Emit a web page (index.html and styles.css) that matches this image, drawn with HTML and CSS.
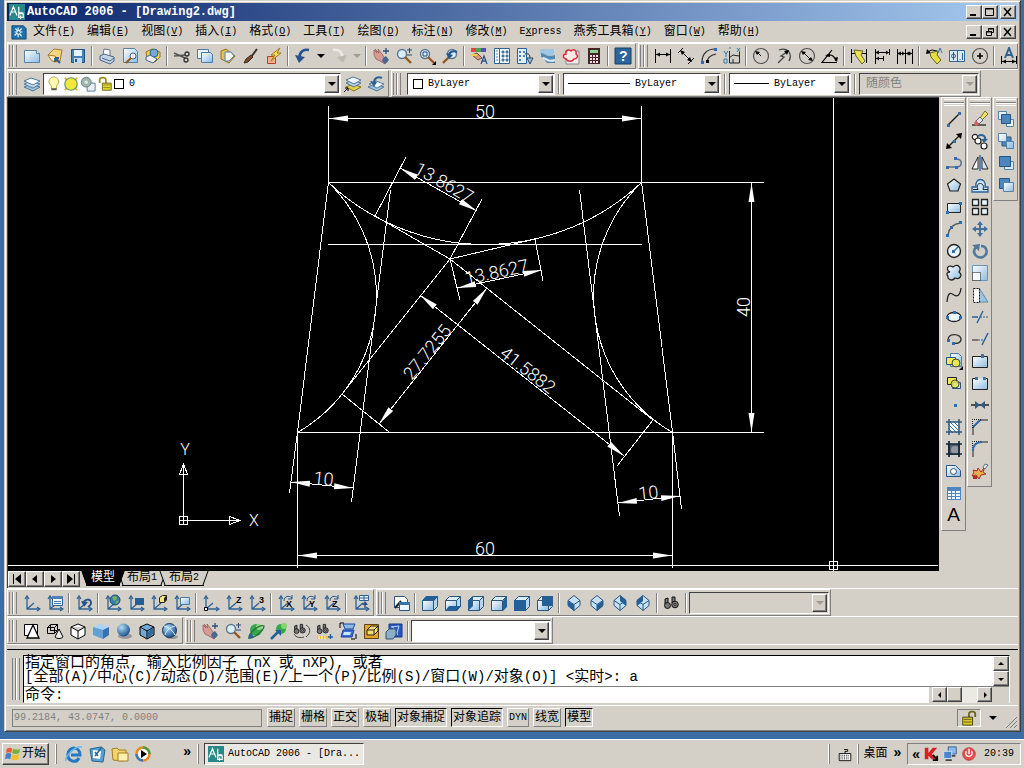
FILE: index.html
```html
<!DOCTYPE html>
<html lang="zh-CN">
  <head>
    <meta charset="UTF-8" />
    <meta name="viewport" content="width=device-width, initial-scale=1.0" />
    <title>AutoCAD 2006 - [Drawing2.dwg]</title>
    <link rel="stylesheet" href="styles.css">
  </head>

  <body>
    <svg class="sprite" aria-hidden="true">
      <defs>
        <linearGradient id="sky" x1="0" y1="0" x2="1" y2="1"><stop offset="0" stop-color="#fff" /><stop offset="1" stop-color="#8dbbe0" /></linearGradient>
        <radialGradient id="ball" cx=".35" cy=".3" r=".7"><stop offset="0" stop-color="#b4dcf8" /><stop offset="1" stop-color="#1d5790" /></radialGradient>
        <marker id="arrow" markerUnits="userSpaceOnUse" markerWidth="20" markerHeight="8" refX="19" refY="4" orient="auto-start-reverse"><path d="M19 4L0 7V1z" fill="#fff" /></marker>
        <g id="axes" fill="none" stroke="#2d6296" stroke-width="1.3"><path d="M4 2v13h13M4 15l7-6" /><path d="M2 5l2-3 2 3M14 13l3 2-3 2" /></g>
        <g id="cube" stroke="#285680" stroke-width="1"><path d="M1.500 6.500l4-4h11l-4 4z" fill="#d9ecfa" /><path d="M1.500 6.500h11v10h-11z" fill="url(#sky)" /><path d="M12.500 6.500l4-4v10l-4 4z" fill="#b3d5f0" /></g>
        <g id="gem" stroke="#285680"><path d="M9 1.500l6 5v5l-6 5-6-5v-5z" fill="#c5e1f6" /><path d="M3 6.500l6 4 6-4M9 10.500v6" fill="none" /></g>
        <g id="hand"><path d="M2 3l3 3-2-4 4 4-1-4 4 5 2 3 4 4-3 3-5-3-4-2-2-4z" fill="#d79b96" stroke="#9c5a58" stroke-width=".8" /><path d="M11 11l3-2 3 4-4 4-3-3z" fill="#47698f" /><path d="M14 1v6M11 4h6" stroke="#254f7d" stroke-width="1.3" /></g>
        <g id="lens"><circle cx="7" cy="7" r="4.500" fill="#d9ecf8" stroke="#5b7894" stroke-width="1.4" /><path d="M10 10l6 6" stroke="#94591f" stroke-width="2.4" /></g>
        <g id="glasses" fill="#777" stroke="#111"><path d="M2 10V5l3-1v6M9 9V3h3v5" /><circle cx="4.500" cy="11.500" r="3" /><circle cx="12" cy="10.500" r="3.300" /><circle cx="12" cy="10.500" r="1" fill="#fff" /></g>
      </defs>

      <symbol id="acad" viewBox="0 0 18 18"><path d="M0 0h18v18H0z" fill="#278a88" /><path d="M1 13L5 3l4 10M3 9h4M11 3v7h5M13 17v-4M11 11h5v4h-5z" fill="none" stroke="#fff" stroke-width="1.300" /></symbol>
      <symbol id="dwg" viewBox="0 0 18 18"><path d="M1 2h13l3 3v12H1z" fill="#216fa8" stroke="#134872" /><path d="M8 4v11M4 9h9M5 5l7 9M12 5l-8 8" stroke="#d5f1ff" stroke-width="1.400" /><circle cx="8.500" cy="9.500" r="2" fill="#216fa8" stroke="#fff" /></symbol>

      <symbol id="new" viewBox="0 0 18 18"><path d="M1.500 3.500h12l3 3v9h-15z" fill="url(#sky)" stroke="#5583a6" /><path d="M13.500 3.500v3h3" fill="#fff" stroke="#5583a6" /></symbol>
      <symbol id="open" viewBox="0 0 18 18"><path d="M2 8l6-6 8 1-2 11-6 1z" fill="#f2d583" stroke="#a77d26" /><path d="M2 8l7 1 5 6-8-1z" fill="#fff2b9" stroke="#a77d26" /><path d="M9 11l5 5M9 11h4M9 11v4" stroke="#2e5f91" stroke-width="1.800" /></symbol>
      <symbol id="save" viewBox="0 0 18 18"><path d="M2.500 2.500h13v13h-13z" fill="#4a82b8" stroke="#235184" /><path d="M5 3h8v6H5z" fill="#e8f4fc" /><path d="M5 11h8v5H5z" fill="#c5d9e8" /><path d="M6 12h2v3H6z" fill="#285680" /></symbol>
      <symbol id="print" viewBox="0 0 18 18"><path d="M5 8L6 2l6 1v6" fill="#fff" stroke="#617894" /><path d="M2 9l4-2 10 3v4l-4 3-10-4z" fill="#c6d5e5" stroke="#496585" /><path d="M4 11l8 3 4-3" fill="none" stroke="#496585" /></symbol>
      <symbol id="preview" viewBox="0 0 18 18"><path d="M2.500 1.500h11l3 3v11h-14z" fill="url(#sky)" stroke="#5583a6" /><circle cx="12" cy="9" r="3" fill="#eef" stroke="#496585" /><path d="M10 11l-5 5" stroke="#94591f" stroke-width="2" /></symbol>
      <symbol id="publish" viewBox="0 0 18 18"><path d="M2 5l6-3 8 3v5l-5 5-8-4z" fill="#f1cf55" stroke="#927020" /><circle cx="10" cy="6" r="4" fill="#75aad5" stroke="#2c6294" /><path d="M2 10l4-2 7 4-4 4-7-3z" fill="#e7edf3" stroke="#496585" /></symbol>
      <symbol id="cut" viewBox="0 0 18 18"><path d="M1 6l11 5M1 9l11-1" stroke="#555" stroke-width="1.700" /><circle cx="14" cy="7" r="2" fill="none" stroke="#333" stroke-width="1.300" /><circle cx="13" cy="13" r="2" fill="none" stroke="#333" stroke-width="1.300" /></symbol>
      <symbol id="copy" viewBox="0 0 18 18"><path d="M1.500 2.500h11v9h-11z" fill="#e8f4fc" stroke="#4c7ca4" /><path d="M5.500 5.500h9l2 2v8h-11z" fill="url(#sky)" stroke="#4c7ca4" /></symbol>
      <symbol id="paste" viewBox="0 0 18 18"><path d="M2 4l5-2 9 7-6 7-8-4z" fill="#e6c256" stroke="#927020" /><path d="M6 5h6l3 4-5 5H6z" fill="#eff8ff" stroke="#5583a6" /></symbol>
      <symbol id="match" viewBox="0 0 18 18"><path d="M15 2L9 10" stroke="#3b302a" stroke-width="2" /><path d="M9 8l2 2-5 5-4 1 2-4z" fill="#7b492b" stroke="#402a20" /></symbol>
      <symbol id="bedit" viewBox="0 0 18 18"><path d="M2.500 9.500h8v7h-8z" fill="#f0b285" stroke="#bb3f24" /><path d="M15 1L6 8h4l-4 6 10-8h-4z" fill="#ffe052" stroke="#a67418" /></symbol>
      <symbol id="undo" viewBox="0 0 18 18"><path d="M5 11C6 4 10 2 15 3" fill="none" stroke="#24548d" stroke-width="2.600" /><path d="M1 8l4 8 6-6z" fill="#24548d" /></symbol>
      <symbol id="redo" viewBox="0 0 18 18"><path d="M13 11C12 4 8 2 3 3" fill="none" stroke="#eceae5" stroke-width="2.600" /><path d="M17 8l-4 8-6-6z" fill="#bdb9b1" /></symbol>
      <symbol id="pan" viewBox="0 0 18 18"><use href="#hand" /></symbol>
      <symbol id="zoom" viewBox="0 0 18 18"><use href="#lens" /><path d="M12 3h5M14.500 1v5M12 8h5" stroke="#254f7d" /></symbol>
      <symbol id="zoomwin" viewBox="0 0 18 18"><use href="#lens" /><path d="M5 5h4v4H5z" fill="none" stroke="#254f7d" /><path d="M18 14v4h-4z" /></symbol>
      <symbol id="zoomprev" viewBox="0 0 18 18"><g transform="matrix(-1 0 0 1 18 0)"><use href="#lens" /></g><path d="M8 9c0-4 4-6 8-4" fill="none" stroke="#24548d" stroke-width="2" /><path d="M5 6l3 6 4-4z" fill="#24548d" /></symbol>
      <symbol id="props" viewBox="0 0 18 18"><path d="M1 1h5v4H1z" fill="#e64343" /><path d="M6 1h5v4H6z" fill="#44a74c" /><path d="M11 1h5v4h-5z" fill="#584bc0" /><path d="M2 8l5-2 5 5-4 2z" fill="#d69b7e" stroke="#7e4635" /><path d="M1 7h6v2H1z" fill="#e8d24a" /><path d="M11 17l3-8 3 8M12 14h4" fill="none" stroke="#24548d" stroke-width="1.300" /></symbol>
      <symbol id="dcenter" viewBox="0 0 18 18"><path d="M1.500 1.500h15v15h-15z" fill="#f5faff" stroke="#2c6294" /><path d="M6.500 2v14" stroke="#2c6294" /><path d="M3 4h2M3 7h2M3 10h2M3 13h2M9 4h2v2H9zM13 4h2v2h-2zM9 8h2v2H9zM13 8h2v2h-2zM9 12h2v2H9zM13 12h2v2h-2z" fill="#4a82b8" stroke="#3c6d9d" stroke-width=".8" /></symbol>
      <symbol id="palettes" viewBox="0 0 18 18"><path d="M1.500 1.500h9v15h-9z" fill="#e0effb" stroke="#2c6294" /><path d="M3 4h2v2H3zM7 4h2v2H7zM3 8h2v2H3zM7 8h2v2H7zM3 12h2v2H3z" fill="#4a82b8" /><path d="M9 7c4-1 5 1 5 4" fill="none" stroke="#333" /><path d="M11 11h6l-3 6z" fill="#9ebcd5" stroke="#294b6c" /></symbol>
      <symbol id="sheets" viewBox="0 0 18 18"><path d="M1 2h14v5l-4 2-10-2z" fill="#9dc7e2" /><path d="M2 6c5 0 4 5 14 2v8H9C6 16 6 10 2 10z" fill="#548ab0" /><path d="M4 11c4 0 4 5 12 2" fill="none" stroke="#dceef7" stroke-width="2" /></symbol>
      <symbol id="markup" viewBox="0 0 18 18"><path d="M4 4h13v13H4z" fill="#eee" stroke="#888" /><path d="M4 12c-4-1-3-5 0-5-1-4 3-5 5-3 3-3 6 0 5 3 3 2 1 5-2 5-2 3-6 3-8 0z" fill="#ffe9e5" stroke="#d82737" stroke-width="1.400" /></symbol>
      <symbol id="calc" viewBox="0 0 18 18"><path d="M3 1h12v16H3z" fill="#43262a" /><path d="M5 3h8v3H5z" fill="#92d391" /><path d="M5 8h2v2H5zM8 8h2v2H8zM11 8h2v2h-2zM5 11h2v2H5zM8 11h2v2H8zM11 11h2v2h-2zM5 14h2v2H5zM8 14h2v2H8zM11 14h2v2h-2z" fill="#f8dce0" /></symbol>
      <symbol id="help" viewBox="0 0 18 18"><path d="M1 1h16v16H1z" fill="#2d669c" stroke="#153f67" /></symbol>

      <symbol id="dlinear" viewBox="0 0 18 18"><path d="M1.500 2v14M16.500 2v14M2 7.500h14" stroke="#000" /><path d="M2 7.500l4-2v4zM16 7.500l-4-2v4z" /></symbol>
      <symbol id="daligned" viewBox="0 0 18 18"><path d="M1 6l5-5M11 17l6-6M4 4l10 10" stroke="#000" /><path d="M3 3l5 2-3 3zM15 15l-5-2 3-3z" /></symbol>
      <symbol id="darc" viewBox="0 0 18 18"><path d="M2 15C2 7 7 2 15 2M7 16c0-5 4-8 9-9" fill="none" stroke="#333" stroke-width="1.200" /><path d="M1 14h3v3H1zM14 1h3v3h-3z" fill="#2f6eae" /><path d="M6 13h3v3H6z" /></symbol>
      <symbol id="dord" viewBox="0 0 18 18"><path d="M6.500 4v12h10V5M6 11l4-3 6 1M10 12v4" fill="none" stroke="#222" /><path d="M1 4l2 3 2-3M3 7v3M1 12h3v4H1zM6 1h2M14 1l3 4M17 1l-3 4" fill="none" stroke="#3574ad" /></symbol>
      <symbol id="dradius" viewBox="0 0 18 18"><circle cx="9" cy="9" r="7.500" fill="none" stroke="#555" stroke-width="1.200" /><path d="M9 9L5 5" stroke="#000" /><path d="M3 4l5 1-3 3z" /></symbol>
      <symbol id="djog" viewBox="0 0 18 18"><path d="M4 3c8-3 14 3 10 11M3 16l6-6-3-1 6-4" fill="none" stroke="#444" stroke-width="1.300" /><path d="M14 3l-5 1 3 4z" /></symbol>
      <symbol id="ddiam" viewBox="0 0 18 18"><circle cx="9" cy="9" r="7.500" fill="none" stroke="#555" stroke-width="1.200" /><path d="M5 5l8 8" stroke="#000" /><path d="M3 4l5 1-3 3zM15 14l-5-1 3-3z" /></symbol>
      <symbol id="dang" viewBox="0 0 18 18"><path d="M16 15.500H1L11 3M6 8c5-1 8 2 9 6" fill="none" stroke="#000" stroke-width="1.200" /><path d="M4 9l5-3v4zM13 11l4-1-1 5z" /></symbol>
      <symbol id="qdim" viewBox="0 0 18 18"><path d="M1.500 2v14M16.500 2v14M2 6.500h14" stroke="#000" /><path d="M4 3l9 1-2 4 4 6-3 3-6-8z" fill="#ece34b" stroke="#67621b" /></symbol>
      <symbol id="dbase" viewBox="0 0 18 18"><path d="M2.500 2v15M16.500 2v6M10.500 9v5M3 5.500h13M3 11.500h7" stroke="#000" /><path d="M2 5.500l4-2v4zM16 5.500l-3-2v4zM3 11.500l3-2v4z" /></symbol>
      <symbol id="dcont" viewBox="0 0 18 18"><path d="M1.500 2v15M9.500 2v15M16.500 2v15M2 6.500h14" stroke="#000" /><path d="M1 6.500l4-2v4zM9 6.500l-3-2v4zM10 6.500l3-2v4zM16 6.500l-3-2v4z" /></symbol>
      <symbol id="leader" viewBox="0 0 18 18"><path d="M2 5l5-2 5 1" fill="none" stroke="#000" /><path d="M1 7l1-5 4 4z" /><path d="M5 6l8-2-1 4 4 5-4 4-6-7z" fill="#e8df3e" stroke="#67621b" /><path d="M13 6l2-5 2 5" fill="none" stroke="#2f6eae" /></symbol>
      <symbol id="tol" viewBox="0 0 18 18"><path d="M1.500 3.500h15v11h-15zM9.500 4v10" fill="#d8e9f8" stroke="#2c6294" /><circle cx="5.500" cy="9" r="2" fill="none" stroke="#2c6294" /><path d="M5.500 5v8M12 12v1M14.500 6v7" stroke="#2c6294" /></symbol>
      <symbol id="dcen" viewBox="0 0 18 18"><circle cx="9" cy="9" r="7.500" fill="none" stroke="#555" stroke-width="1.200" /><path d="M9 6v6M6 9h6" stroke="#000" stroke-width="1.600" /></symbol>
      <symbol id="dedit" viewBox="0 0 18 18"><path d="M5 11L9 1l4 10M6 8h6" fill="none" stroke="#2c6294" stroke-width="2" /><path d="M1.500 9v8M16.500 9v8M2 14.500h14" stroke="#000" /><path d="M2 14.500l4-2v4zM16 14.500l-4-2v4z" /></symbol>

      <symbol id="layers" viewBox="0 0 18 18"><path d="M1 12l7-3 9 3-7 4z" fill="#9dc3df" stroke="#53789a" /><path d="M1 9l7-3 9 3-7 4z" fill="#c9e0f0" stroke="#53789a" /><path d="M1 6l7-3 9 3-7 4z" fill="#f4faff" stroke="#53789a" /></symbol>
      <symbol id="laycur" viewBox="0 0 18 18"><path d="M2 12l7-3 8 3-7 4z" fill="#e6d341" stroke="#837422" /><path d="M2 8l7-3 8 3-7 4z" fill="#b6d3e8" stroke="#53789a" /><path d="M2 5l7-3 8 3-7 4z" fill="#f4faff" stroke="#53789a" /><path d="M0 17l4-4M1 13h3v3" stroke="#000" fill="none" /></symbol>
      <symbol id="layprev" viewBox="0 0 18 18"><path d="M1 12l7-3 9 3-7 4z" fill="#9dc3df" stroke="#53789a" /><path d="M2 9l7-3 8 3-7 4z" fill="#f4faff" stroke="#53789a" /><path d="M7 8c0-5 4-7 8-5" fill="none" stroke="#2d6296" stroke-width="2" /><path d="M3 6l4 6 3-5z" fill="#2d6296" /></symbol>
      <symbol id="bulb" viewBox="0 0 18 18"><path d="M6 11C0 6 5 1 9 1s8 5 3 10v3H6z" fill="#fffbb0" stroke="#a4a14d" /><path d="M6 14h6v2H6z" fill="#555" /></symbol>
      <symbol id="sun" viewBox="0 0 18 18"><path d="M2 2l3 3M16 2l-3 3M2 16l3-3M16 16l-3-3" stroke="#d8b720" stroke-width="2" /><circle cx="9" cy="9" r="7" fill="#f3e839" stroke="#5a956b" stroke-width="1.300" /></symbol>
      <symbol id="vpsun" viewBox="0 0 18 18"><path d="M8 8h9v9H8z" fill="#eee" stroke="#47739a" /><circle cx="7" cy="7" r="5.500" fill="#9eb4ad" stroke="#617f83" /><circle cx="7" cy="7" r="2" fill="#dce4df" /></symbol>
      <symbol id="lock" viewBox="0 0 18 18"><path d="M3 8V4c0-3 7-3 7 0v4" fill="none" stroke="#9b9219" stroke-width="2" /><path d="M6 8h10v8H6z" fill="#e3d831" stroke="#686218" /><path d="M7 10h8M7 13h8" stroke="#918917" /></symbol>
      <symbol id="padlock" viewBox="0 0 18 18"><path d="M9 8V4c0-3 7-3 7 0v4" fill="none" stroke="#6b6414" stroke-width="2" /><path d="M2 8h11v9H2z" fill="#d8cc2a" stroke="#3d390f" /><path d="M3 10.500h9M3 13.500h9" stroke="#5c5514" /></symbol>

      <symbol id="line" viewBox="0 0 18 18"><path d="M3 15L15 3" stroke="#222" stroke-width="1.400" /><path d="M2 14h3v3H2zM13 2h3v3h-3z" fill="#2f6eae" /></symbol>
      <symbol id="xline" viewBox="0 0 18 18"><path d="M2 16L16 2" stroke="#222" stroke-width="1.400" /><path d="M1 17l1-6 5 5zM17 1l-1 6-5-5z" /><path d="M8 8h3v3H8z" fill="#2f6eae" /></symbol>
      <symbol id="pline" viewBox="0 0 18 18"><path d="M2 13h9c7 0 7-8 0-8" fill="none" stroke="#5c7187" stroke-width="1.500" /><path d="M1 12h3v3H1zM10 12h3v3h-3zM9 3h3v3H9z" fill="#2f6eae" /></symbol>
      <symbol id="polygon" viewBox="0 0 18 18"><path d="M9 3l6.500 5-2.500 7H5L2.500 8z" fill="url(#sky)" stroke="#222" stroke-width="1.200" /></symbol>
      <symbol id="rect" viewBox="0 0 18 18"><path d="M2.500 5.500h13v9h-13z" fill="url(#sky)" stroke="#222" /><path d="M1 13h3v3H1zM14 4h3v3h-3z" fill="#2f6eae" /></symbol>
      <symbol id="arc" viewBox="0 0 18 18"><path d="M3 15C4 8 8 4 15 3" fill="none" stroke="#555" stroke-width="1.500" /><path d="M1 14h3v3H1zM5 6h3v3H5zM14 1h3v3h-3z" fill="#2f6eae" /></symbol>
      <symbol id="circle" viewBox="0 0 18 18"><circle cx="9" cy="9" r="6.500" fill="#e8f4fc" stroke="#222" stroke-width="1.400" /><path d="M8 10l5-5" stroke="#2f6eae" stroke-width="1.500" /><path d="M7 8h3v3H7z" fill="#2f6eae" /></symbol>
      <symbol id="cloud" viewBox="0 0 18 18"><path d="M5 8C0 6 3 0 8 3c5-4 9 1 6 5 4 3 1 8-4 6-3 4-8 1-7-2-2-2-1-4 2-4z" fill="url(#sky)" stroke="#222" stroke-width="1.300" /></symbol>
      <symbol id="spline" viewBox="0 0 18 18"><path d="M2 16C3 5 6 7 9 9s6 1 7-7" fill="none" stroke="#222" stroke-width="1.300" /></symbol>
      <symbol id="ellipse" viewBox="0 0 18 18"><ellipse cx="9" cy="9" rx="7" ry="4.500" fill="#e8f4fc" stroke="#222" stroke-width="1.300" /><path d="M1 8h3v3H1zM14 8h3v3h-3zM8 3h3v3H8z" fill="#2f6eae" /></symbol>
      <symbol id="earc" viewBox="0 0 18 18"><path d="M3 10c0-8 13-6 13-1 0 4-4 5-8 4" fill="none" stroke="#333" stroke-width="1.400" /><path d="M2 9h3v3H2zM7 12h3v3H7z" fill="#2f6eae" /></symbol>
      <symbol id="block" viewBox="0 0 18 18"><path d="M2.500 3.500h9v7h-9z" fill="#f2e94d" stroke="#222" /><path d="M7.500 8.500h8v6h-8z" fill="#c5e1f6" stroke="#285680" /><circle cx="10" cy="10" r="4" fill="#e7e84a" fill-opacity=".8" stroke="#444" /></symbol>
      <symbol id="insert" viewBox="0 0 18 18"><path d="M5.500 1.500h8l3 3v10h-11z" fill="url(#sky)" stroke="#4c7ca4" /><path d="M1.500 5.500h9v7h-9z" fill="#f2e94d" stroke="#285680" /><circle cx="11" cy="11" r="4" fill="#e7e84a" stroke="#444" /><path d="M18 14v4h-4z" /></symbol>
      <symbol id="point" viewBox="0 0 18 18"><path d="M9 8h3v3H9z" fill="#2f6eae" /></symbol>
      <symbol id="hatch" viewBox="0 0 18 18"><path d="M3 4h12v11H3z" fill="#fff" /><path d="M3 6l9 9M3 10l5 5M5 4l10 10M9 4l6 6" stroke="#3473b0" /><path d="M4 1v16M14 1v16M1 4h16M1 14h16" stroke="#285680" stroke-width="1.500" /></symbol>
      <symbol id="gradient" viewBox="0 0 18 18"><path d="M3 4h12v11H3z" fill="#56626d" /><circle cx="10" cy="10" r="4" fill="#91999e" /><path d="M4 1v16M14 1v16M1 4h16M1 14h16" stroke="#13243a" stroke-width="1.700" /></symbol>
      <symbol id="region" viewBox="0 0 18 18"><path d="M1.500 3.500h9l5 5v6h-14z" fill="url(#sky)" stroke="#285680" /><circle cx="8.500" cy="9.500" r="3" fill="#fff" stroke="#285680" /></symbol>
      <symbol id="table" viewBox="0 0 18 18"><path d="M2 3h14v13H2z" fill="#4b86c4" /><path d="M3 7h3v2H3zM7 7h3v2H7zM11 7h4v2h-4zM3 10h3v2H3zM7 10h3v2H7zM11 10h4v2h-4zM3 13h3v2H3zM7 13h3v2H7zM11 13h4v2h-4z" fill="#edf6ff" /></symbol>

      <symbol id="erase" viewBox="0 0 18 18"><path d="M1 15h14" stroke="#222" stroke-width="1.300" /><path d="M9 8l5-7 3 3-6 6z" fill="#f2e463" stroke="#777023" /><path d="M5 11l4-4 3 3-4 4z" fill="#dde6ef" stroke="#567" /><path d="M3 13l2-3 3 4-3 2z" fill="#de635d" /></symbol>
      <symbol id="copyobj" viewBox="0 0 18 18"><g fill="#fff" stroke="#222" stroke-width="1.200"><circle cx="4" cy="5" r="2.700" /><circle cx="7" cy="9" r="3" /><circle cx="13" cy="14" r="3" /></g><path d="M7 4c5-3 8 1 7 4" fill="none" stroke="#2d6296" stroke-width="2" /><path d="M10 7h7l-4 4z" fill="#2d6296" /></symbol>
      <symbol id="mirror" viewBox="0 0 18 18"><path d="M7 3v12H1z" fill="#fff" stroke="#222" /><path d="M11 3v12h6z" fill="#d4e8f8" stroke="#222" /><path d="M9 1v16" stroke="#2f6eae" stroke-width="1.500" /></symbol>
      <symbol id="offset" viewBox="0 0 18 18"><path d="M1 16v-5h4c-2-10 11-10 9 0h3v5z" fill="#cae3f7" stroke="#2d6296" stroke-width="1.300" /><path d="M2 13.500h5c-4-8 8-8 5 0h5" fill="none" stroke="#222" /></symbol>
      <symbol id="array" viewBox="0 0 18 18"><path d="M1.500 1.500h6v6h-6zM10.500 1.500h6v6h-6zM1.500 10.500h6v6h-6zM10.500 10.500h6v6h-6z" fill="#e8f4fc" stroke="#222" stroke-width="1.300" /></symbol>
      <symbol id="move" viewBox="0 0 18 18"><path d="M9 3v12M3 9h12" stroke="#3f709e" stroke-width="2" /><path d="M9 1l3 4H6zM9 17l3-4H6zM1 9l4-3v6zM17 9l-4-3v6z" fill="#3f709e" /></symbol>
      <symbol id="rotate" viewBox="0 0 18 18"><path d="M5 5c-5 6 1 12 7 10 6-3 4-11-2-11" fill="none" stroke="#53779a" stroke-width="2.500" /><path d="M1 3l8-1-1 7z" fill="#53779a" /></symbol>
      <symbol id="scale" viewBox="0 0 18 18"><path d="M1.500 1.500h15v15h-15z" fill="url(#sky)" stroke="#6996b8" /><path d="M1.500 8.500h8v8h-8z" fill="#f5faff" stroke="#111" stroke-dasharray="1 1" /></symbol>
      <symbol id="stretch" viewBox="0 0 18 18"><path d="M8 2l9 14H8z" fill="#9bc5e3" stroke="#598bb0" /><path d="M2.500 2.500h6v14h-6z" fill="#fff" stroke="#111" stroke-dasharray="2 1" /></symbol>
      <symbol id="trim" viewBox="0 0 18 18"><path d="M1 9h6M12 3L6 15" stroke="#2d6296" stroke-width="1.400" /><path d="M9 9h9" stroke="#2d6296" stroke-dasharray="2 1" /></symbol>
      <symbol id="extend" viewBox="0 0 18 18"><path d="M1 10h6" stroke="#222" /><path d="M7 10h5" stroke="#2d6296" stroke-dasharray="2 1" /><path d="M17 3l-6 12" stroke="#2d6296" stroke-width="1.500" /></symbol>
      <symbol id="breakpt" viewBox="0 0 18 18"><path d="M1.500 4.500h15v11h-15z" fill="url(#sky)" stroke="#222" /><path d="M10 2h3v4h-3z" fill="#47739a" /></symbol>
      <symbol id="break" viewBox="0 0 18 18"><path d="M5 4.500H1.500v11h15v-11H14" fill="url(#sky)" stroke="#222" /><path d="M4 3h3v3H4zM12 3h3v3h-3z" fill="#47739a" /></symbol>
      <symbol id="join" viewBox="0 0 18 18"><path d="M0 9h18" stroke="#222" stroke-width="1.500" /><path d="M4 5l5 4-5 4zM14 5l-5 4 5 4z" fill="#31587e" /></symbol>
      <symbol id="chamfer" viewBox="0 0 18 18"><path d="M1.500 10V1.500H10" fill="none" stroke="#222" stroke-dasharray="1 1" /><path d="M2 17v-7l8-8h7" fill="none" stroke="#222" /><path d="M2 9l7-7" stroke="#2f6eae" stroke-width="2" /></symbol>
      <symbol id="fillet" viewBox="0 0 18 18"><path d="M1.500 10V1.500H10" fill="none" stroke="#222" stroke-dasharray="1 1" /><path d="M2 17v-6M10 2h7" stroke="#222" /><path d="M2 11c0-6 3-9 9-9" fill="none" stroke="#2f6eae" stroke-width="2" /></symbol>
      <symbol id="explode" viewBox="0 0 18 18"><path d="M2 8l4 1 1-3 3 4 5-7-3 7 3 2-5 1-2 4-3-4-4 1 2-4z" fill="#e6b34b" stroke="#a92d25" /><path d="M12 5l2-3 3 1-3 4z" fill="#eee" stroke="#62768d" /><path d="M2 14h4v3H2z" fill="#a92d25" /></symbol>

      <symbol id="front1" viewBox="0 0 18 18"><path d="M1.500 1.500h8v8h-8zM9.500 9.500h7v7h-7z" fill="#e8f4fc" stroke="#5482aa" /><path d="M4.500 4.500h9v9h-9z" fill="#4d86bd" stroke="#285680" /></symbol>
      <symbol id="back1" viewBox="0 0 18 18"><path d="M5 5h9v9H5z" fill="#4d86bd" stroke="#285680" /><path d="M1.500 1.500h8v8h-8zM9.500 9.500h7v7h-7z" fill="url(#sky)" stroke="#5482aa" /></symbol>
      <symbol id="above" viewBox="0 0 18 18"><path d="M7.500 7.500h9v8h-9z" fill="#d4e8f8" stroke="#5482aa" /><path d="M2.500 2.500h11v10h-11z" fill="#4d86bd" stroke="#285680" /></symbol>
      <symbol id="under" viewBox="0 0 18 18"><path d="M2.500 2.500h10v10h-10z" fill="#4d86bd" stroke="#285680" /><path d="M6.500 6.500h10v9h-10z" fill="url(#sky)" stroke="#5482aa" /></symbol>

      <symbol id="ucs" viewBox="0 0 18 18"><use href="#axes" /></symbol>
      <symbol id="ucsnamed" viewBox="0 0 18 18"><use href="#axes" /><path d="M6.500 2.500h10v9h-10z" fill="#eef7fe" stroke="#2d6296" /><path d="M6 2h11v3H6zM8 7h7v1H8zM8 9h7v1H8z" fill="#4a82b8" /></symbol>
      <symbol id="ucsprev" viewBox="0 0 18 18"><use href="#axes" /><path d="M9 9c0-4 7-5 7 0 0 3-2 3-3 4" fill="none" stroke="#24548d" stroke-width="2" /><path d="M6 7l3 6 4-5z" fill="#24548d" /></symbol>
      <symbol id="ucsworld" viewBox="0 0 18 18"><use href="#axes" /><circle cx="11" cy="6" r="5" fill="#347fa8" stroke="#264f70" /><path d="M8 3l4-1 1 3-3 2zM11 8l4-2-2 4z" fill="#77b759" /></symbol>
      <symbol id="ucsobj" viewBox="0 0 18 18"><use href="#axes" /><path d="M8 4h9v7H8z" fill="#235e96" /></symbol>
      <symbol id="ucsface" viewBox="0 0 18 18"><use href="#axes" /><path d="M9.500 3.500l3-2h4v4l-2 3h-5z" fill="#f1e97b" stroke="#222" /><path d="M14 4v4l3-2V1z" fill="#222" /></symbol>
      <symbol id="ucsview" viewBox="0 0 18 18"><use href="#axes" /><path d="M7.500 3.500h9v7h-9z" fill="url(#sky)" stroke="#4c7ca4" /></symbol>
      <symbol id="ucsorg" viewBox="0 0 18 18"><use href="#axes" /><path d="M2.500 13.500h3v3h-3z" fill="#fff" stroke="#000" /></symbol>
      <symbol id="ucsrot" viewBox="0 0 18 18"><use href="#axes" /><path d="M7 7c0-5 5-6 8-3M15 1v4h-4" fill="none" stroke="#24548d" /></symbol>
      <symbol id="ucsapply" viewBox="0 0 18 18"><use href="#axes" /><path d="M7.500 1.500h9v5h-9zM12 2v4M8 4h8" fill="#eef7fe" stroke="#2d6296" /><path d="M13 14V9" stroke="#24548d" stroke-width="1.500" /><path d="M10 11l3-4 3 4z" fill="#24548d" /></symbol>

      <symbol id="views" viewBox="0 0 18 18"><path d="M2.500 2.500h10l3 3v8h-13z" fill="#fff" stroke="#285680" /><path d="M3 14l6-7" stroke="#222" stroke-width="2" /><path d="M7.500 8.500h10v8h-10z" fill="#edf6ff" stroke="#285680" /><path d="M7 8h11v3H7z" fill="#3473b0" /></symbol>
      <symbol id="vtop" viewBox="0 0 18 18"><use href="#cube" /><path d="M1 7l4-5h12l-4 5z" fill="#245f96" /></symbol>
      <symbol id="vbottom" viewBox="0 0 18 18"><use href="#cube" /><path d="M1 17l4-5h12l-4 5z" fill="#245f96" /></symbol>
      <symbol id="vleft" viewBox="0 0 18 18"><use href="#cube" /><path d="M1 7l5-5v10l-5 5z" fill="#245f96" /></symbol>
      <symbol id="vright" viewBox="0 0 18 18"><use href="#cube" /><path d="M13 7l4-5v11l-4 4z" fill="#245f96" /></symbol>
      <symbol id="vfront" viewBox="0 0 18 18"><use href="#cube" /><path d="M1 6h12v11H1z" fill="#245f96" /></symbol>
      <symbol id="vback" viewBox="0 0 18 18"><use href="#cube" /><path d="M6 2h11v10H6z" fill="#245f96" /></symbol>
      <symbol id="vsw" viewBox="0 0 18 18"><use href="#gem" /><path d="M3 7l6 4v6l-6-5z" fill="#245f96" /></symbol>
      <symbol id="vse" viewBox="0 0 18 18"><use href="#gem" /><path d="M15 7l-6 4v6l6-5z" fill="#245f96" /></symbol>
      <symbol id="vne" viewBox="0 0 18 18"><use href="#gem" /><path d="M9 1l6 5v6l-6-5z" fill="#245f96" /></symbol>
      <symbol id="vnw" viewBox="0 0 18 18"><use href="#gem" /><path d="M9 1L3 6v6l6-5z" fill="#245f96" /></symbol>
      <symbol id="camera" viewBox="0 0 18 18"><use href="#glasses" /></symbol>

      <symbol id="sh2d" viewBox="0 0 18 18"><path d="M1.500 2.500h13v11h-13z" fill="#fff" stroke="#000" /><path d="M10 3l6 13H4z" fill="#fff" stroke="#000" stroke-width="1.300" /></symbol>
      <symbol id="sh3d" viewBox="0 0 18 18"><path d="M1.500 5.500l3-3h7l-3 3zM1.500 5.500h7v6h-7zM8.500 5.500l3-3v6l-3 3M4.500 3v6M4 8.500h7" fill="none" stroke="#000" /><path d="M13 7l4 8c-2 2-6 2-8 0z" fill="#eee" stroke="#000" /></symbol>
      <symbol id="shhid" viewBox="0 0 18 18"><path d="M2 5l7-3 7 3v8l-7 4-7-4zM2 5l7 4 7-4M9 9v8" fill="#fff" stroke="#000" /></symbol>
      <symbol id="shflat" viewBox="0 0 18 18"><path d="M1 5l7-3 9 3-6 3z" fill="#aad5f4" /><path d="M1 5l10 3v9L1 13z" fill="#619fd4" /><path d="M11 8l6-3v8l-6 4z" fill="#3473b0" /></symbol>
      <symbol id="shgour" viewBox="0 0 18 18"><ellipse cx="10" cy="14" rx="7" ry="3" fill="#999" /><circle cx="8.500" cy="8" r="6.500" fill="url(#ball)" /></symbol>
      <symbol id="shflate" viewBox="0 0 18 18"><path d="M2 5l7-3 7 3v8l-7 4-7-4z" fill="#72a8d5" stroke="#000" /><path d="M2 5l7 4 7-4M9 9v8" fill="none" stroke="#000" /><path d="M10 10l5-4v6l-5 4z" fill="#326a9e" /></symbol>
      <symbol id="shgoure" viewBox="0 0 18 18"><ellipse cx="11" cy="15" rx="6" ry="2" fill="#999" /><circle cx="8.500" cy="8.500" r="7" fill="url(#ball)" stroke="#15395d" /><path d="M3 4c5 1 9 5 11 9M14 4c-5 1-9 5-10 9" fill="none" stroke="#e0f0fb" /></symbol>
      <symbol id="orbit" viewBox="0 0 18 18"><circle cx="9" cy="8" r="6" fill="#35a84b" /><circle cx="12" cy="5" r="3" fill="#8fdc7c" /><path d="M2 16C1 12 12 2 17 4c0 5-11 13-15 12z" fill="none" stroke="#277040" stroke-width="1.300" /><path d="M1 17l3-6 3 4z" fill="#245f96" /></symbol>
      <symbol id="corbit" viewBox="0 0 18 18"><circle cx="11" cy="7" r="5" fill="#35a84b" /><circle cx="14" cy="4" r="3" fill="#83d66c" /><path d="M1 17l7-7" stroke="#245f96" stroke-width="2.500" /><path d="M5 8h6v6z" fill="#245f96" /></symbol>
      <symbol id="swivel" viewBox="0 0 18 18"><g transform="scale(.8)"><use href="#glasses" /></g><path d="M13 3c5 3 5 8 0 12M1 12c2 4 7 4 10 3" fill="none" stroke="#444" /></symbol>
      <symbol id="dist" viewBox="0 0 18 18"><g transform="scale(.8)"><use href="#glasses" /></g><path d="M1 14h11v3H1z" fill="#f2bd31" /><path d="M3 14v3M6 14v3M9 14v3" stroke="#fff" /><path d="M12 15h5M14.500 12v5" stroke="#245f96" stroke-width="1.300" /></symbol>
      <symbol id="clipadj" viewBox="0 0 18 18"><path d="M4 2h12l-2 5H6z" fill="#8dbbe0" stroke="#1b43a6" /><path d="M4 8h11l-2 7H2z" fill="#3b70d0" stroke="#1b43a6" /><path d="M1 1v5M1 1h4M16 17h-4M17 17v-5" stroke="#000" /><path d="M5 10h7l-1 3H4z" fill="#cce5ff" /></symbol>
      <symbol id="clipf" viewBox="0 0 18 18"><path d="M2.500 2.500h14v14h-14z" fill="#e5a72b" stroke="#5f4311" /><path d="M5 8l4-4h7v5l-4 4H5z" fill="#f7db74" stroke="#222" /><path d="M5 8h7v5M12 8l4-4" fill="none" stroke="#222" /></symbol>
      <symbol id="clipb" viewBox="0 0 18 18"><path d="M4 2h13v13H4z" fill="#2855c7" stroke="#163982" /><path d="M6 5l8-1-2 7M7 4l6 9" fill="none" stroke="#bcdcff" /><path d="M1 10l3-3h7v6l-3 4H1z" fill="#8baec9" stroke="#33536e" /></symbol>

      <symbol id="winflag" viewBox="0 0 18 18"><path d="M2 3q4-2 6 0L7 8Q4 6 1 8z" fill="#e75b31" /><path d="M9 3q4 2 8 0l-1 5q-4 2-8 0z" fill="#72b33e" /><path d="M1 9q3-2 6 0l-1 6q-3-2-6 0z" fill="#437fce" /><path d="M8 9q4 2 8 0l-1 6q-4 2-8 0z" fill="#f2bf30" /></symbol>
      <symbol id="ie" viewBox="0 0 18 18"><path d="M14 13c-3 6-12 3-11-4 1-8 12-8 12 1H6" fill="none" stroke="#2379c5" stroke-width="3" /><path d="M1 16C-1 12 11 0 17 2" fill="none" stroke="#68b9ec" stroke-width="1.500" /></symbol>
      <symbol id="desk" viewBox="0 0 18 18"><path d="M2 4l11-2 4 3-2 12-11-1z" fill="#57a1d7" stroke="#236396" /><path d="M5 5l8 1-1 8-7-1z" fill="#fff" /><path d="M7 11l7-9M7 7l3 4" stroke="#2a6595" stroke-width="1.500" /></symbol>
      <symbol id="folder" viewBox="0 0 18 18"><path d="M1 4l5-1 2 2h7v9l-3 2-10-1z" fill="#f4d26c" stroke="#a57c24" /><path d="M7 8h10v8H7z" fill="#fff0b1" stroke="#a57c24" /></symbol>
      <symbol id="media" viewBox="0 0 18 18"><circle cx="9" cy="9" r="6.500" fill="#fff" stroke="#e48b24" stroke-width="2.500" /><path d="M9 2.500a6.500 6.500 0 0 1 6.500 6.500" fill="none" stroke="#4b9c45" stroke-width="2.500" /><path d="M2.500 9A6.500 6.500 0 0 0 9 15.500" fill="none" stroke="#377abe" stroke-width="2.500" /><path d="M7 5l6 4-6 4z" /></symbol>
      <symbol id="keyboard" viewBox="0 0 18 18"><path d="M2.500 8.500h13v8h-13z" fill="#fff" stroke="#000" /><path d="M4 10.500h10M4 12.500h10M4 14.500h10" stroke="#000" stroke-dasharray="1 1" /><path d="M9 8V6h3V4H8" fill="none" stroke="#000" /></symbol>
      <symbol id="kav" viewBox="0 0 18 18"><path d="M2 2h4v6l5-6h5l-6 7 5 6h-5L6 11v4H2z" fill="#d91f24" /><path d="M11 10l5 5M16 11v5h-5" fill="none" stroke="#000" stroke-width="2" /></symbol>
      <symbol id="net" viewBox="0 0 18 18"><path d="M7 1h9v8H7z" fill="#8cb9e8" stroke="#315a94" /><path d="M2 6h9v8H2z" fill="#4b84ce" stroke="#d4e4f2" /><path d="M4 16h7M11 11h4" stroke="#444" stroke-width="2" /></symbol>
      <symbol id="power" viewBox="0 0 18 18"><circle cx="9" cy="9" r="7" fill="#e75151" stroke="#b72f36" /><path d="M6 6c-4 7 9 8 6 0M9 3v6" fill="none" stroke="#fff" stroke-width="1.500" /></symbol>
    </svg>

    <main class="window">
      <header class="title-bar">
        <svg class="icon"><use href="#acad" /></svg>
        <h1>AutoCAD 2006 - [Drawing2.dwg]</h1>
        <div class="caption-buttons">
          <button aria-label="最小化"><svg viewBox="0 0 12 10"><path d="M2 8h6" stroke="#000" stroke-width="2" /></svg></button>
          <button aria-label="最大化"><svg viewBox="0 0 12 10"><path d="M1.500 1.500h8v7h-8zM1 2h9" fill="none" stroke="#000" /></svg></button>
          <button aria-label="关闭" class="close"><svg viewBox="0 0 12 10"><path d="M2 1l7 8M9 1L2 9" stroke="#000" stroke-width="1.500" /></svg></button>
        </div>
      </header>

      <nav class="menu-bar">
        <svg class="icon"><use href="#dwg" /></svg>
        <button>文件<span class="en">(<u>F</u>)</span></button>
        <button>编辑<span class="en">(<u>E</u>)</span></button>
        <button>视图<span class="en">(<u>V</u>)</span></button>
        <button>插入<span class="en">(<u>I</u>)</span></button>
        <button>格式<span class="en">(<u>O</u>)</span></button>
        <button>工具<span class="en">(<u>T</u>)</span></button>
        <button>绘图<span class="en">(<u>D</u>)</span></button>
        <button>标注<span class="en">(<u>N</u>)</span></button>
        <button>修改<span class="en">(<u>M</u>)</span></button>
        <button><span class="en">E<u>x</u>press</span></button>
        <button>燕秀工具箱<span class="en">(<u>Y</u>)</span></button>
        <button>窗口<span class="en">(<u>W</u>)</span></button>
        <button>帮助<span class="en">(<u>H</u>)</span></button>
        <div class="caption-buttons">
          <button aria-label="最小化图形"><svg viewBox="0 0 12 10"><path d="M2 8h6" stroke="#000" stroke-width="2" /></svg></button>
          <button aria-label="还原图形"><svg viewBox="0 0 12 10"><path d="M4.500 4V1.500h5v4H8M4 2h6M2.500 4.500h5v4h-5zM2 5h6" fill="none" stroke="#000" /></svg></button>
          <button aria-label="关闭图形" class="close"><svg viewBox="0 0 12 10"><path d="M2 1l7 8M9 1L2 9" stroke="#000" stroke-width="1.500" /></svg></button>
        </div>
      </nav>

      <div class="dock">
        <div class="toolbar">
          <i class="grip"></i>
          <button class="tool" aria-label="新建"><svg><use href="#new" /></svg></button>
          <button class="tool" aria-label="打开"><svg><use href="#open" /></svg></button>
          <button class="tool" aria-label="保存"><svg><use href="#save" /></svg></button>
          <i class="sep"></i>
          <button class="tool" aria-label="打印"><svg><use href="#print" /></svg></button>
          <button class="tool" aria-label="打印预览"><svg><use href="#preview" /></svg></button>
          <button class="tool" aria-label="发布"><svg><use href="#publish" /></svg></button>
          <i class="sep"></i>
          <button class="tool" aria-label="剪切"><svg><use href="#cut" /></svg></button>
          <button class="tool" aria-label="复制"><svg><use href="#copy" /></svg></button>
          <button class="tool" aria-label="粘贴"><svg><use href="#paste" /></svg></button>
          <button class="tool" aria-label="特性匹配"><svg><use href="#match" /></svg></button>
          <button class="tool" aria-label="块编辑器"><svg><use href="#bedit" /></svg></button>
          <i class="sep"></i>
          <button class="tool" aria-label="放弃"><svg><use href="#undo" /></svg></button>
          <button class="more" aria-label="放弃列表"></button>
          <button class="tool" aria-label="重做" disabled><svg><use href="#redo" /></svg></button>
          <button class="more" aria-label="重做列表" disabled></button>
          <i class="sep"></i>
          <button class="tool" aria-label="实时平移"><svg><use href="#pan" /></svg></button>
          <button class="tool" aria-label="实时缩放"><svg><use href="#zoom" /></svg></button>
          <button class="tool" aria-label="窗口缩放"><svg><use href="#zoomwin" /></svg></button>
          <button class="tool" aria-label="缩放上一个"><svg><use href="#zoomprev" /></svg></button>
          <i class="sep"></i>
          <button class="tool" aria-label="特性"><svg><use href="#props" /></svg></button>
          <button class="tool" aria-label="设计中心"><svg><use href="#dcenter" /></svg></button>
          <button class="tool" aria-label="工具选项板"><svg><use href="#palettes" /></svg></button>
          <button class="tool" aria-label="图纸集管理器"><svg><use href="#sheets" /></svg></button>
          <button class="tool" aria-label="标记集管理器"><svg><use href="#markup" /></svg></button>
          <button class="tool" aria-label="快速计算器"><svg><use href="#calc" /></svg></button>
          <i class="sep"></i>
          <button class="tool" aria-label="帮助"><svg><use href="#help" /><text x="5" y="14" fill="#fff" class="glyph-help">?</text></svg></button>
        </div>
        <div class="toolbar grow">
          <i class="grip"></i>
          <button class="tool" aria-label="线性标注"><svg><use href="#dlinear" /></svg></button>
          <button class="tool" aria-label="对齐标注"><svg><use href="#daligned" /></svg></button>
          <button class="tool" aria-label="弧长标注"><svg><use href="#darc" /></svg></button>
          <button class="tool" aria-label="坐标标注"><svg><use href="#dord" /></svg></button>
          <i class="sep"></i>
          <button class="tool" aria-label="半径标注"><svg><use href="#dradius" /></svg></button>
          <button class="tool" aria-label="折弯标注"><svg><use href="#djog" /></svg></button>
          <button class="tool" aria-label="直径标注"><svg><use href="#ddiam" /></svg></button>
          <button class="tool" aria-label="角度标注"><svg><use href="#dang" /></svg></button>
          <i class="sep"></i>
          <button class="tool" aria-label="快速标注"><svg><use href="#qdim" /></svg></button>
          <button class="tool" aria-label="基线标注"><svg><use href="#dbase" /></svg></button>
          <button class="tool" aria-label="连续标注"><svg><use href="#dcont" /></svg></button>
          <i class="sep"></i>
          <button class="tool" aria-label="快速引线"><svg><use href="#leader" /></svg></button>
          <button class="tool" aria-label="公差"><svg><use href="#tol" /></svg></button>
          <button class="tool" aria-label="圆心标记"><svg><use href="#dcen" /></svg></button>
          <i class="sep"></i>
          <button class="tool" aria-label="编辑标注"><svg><use href="#dedit" /></svg></button>
        </div>
      </div>

      <div class="dock">
        <div class="toolbar">
          <i class="grip"></i>
          <button class="tool" aria-label="图层特性管理器"><svg><use href="#layers" /></svg></button>
          <div class="combo layer">
            <svg><use href="#bulb" /></svg><svg><use href="#sun" /></svg><svg><use href="#vpsun" /></svg><svg><use href="#lock" /></svg>
            <i class="swatch"></i>
            <select aria-label="图层"><option>0</option></select>
            <i class="drop"></i>
          </div>
          <button class="tool" aria-label="将对象的图层置为当前"><svg><use href="#laycur" /></svg></button>
          <button class="tool" aria-label="上一个图层"><svg><use href="#layprev" /></svg></button>
        </div>
        <div class="toolbar">
          <i class="grip"></i>
          <div class="combo color">
            <i class="swatch"></i>
            <select aria-label="颜色"><option>ByLayer</option></select>
            <i class="drop"></i>
          </div>
          <i class="sep"></i>
          <div class="combo linetype">
            <i class="rule"></i>
            <select aria-label="线型"><option>ByLayer</option></select>
            <i class="drop"></i>
          </div>
          <i class="sep"></i>
          <div class="combo weight">
            <i class="rule"></i>
            <select aria-label="线宽"><option>ByLayer</option></select>
            <i class="drop"></i>
          </div>
          <i class="sep"></i>
          <div class="combo plot off">
            <select class="zh" aria-label="打印样式" disabled><option>随颜色</option></select>
            <i class="drop"></i>
          </div>
        </div>
      </div>

      <div class="workspace">
        <section class="drawing">
          <svg class="canvas" role="img" aria-label="图形">
            <g transform="translate(-8 -98)">
              <!-- geometry -->
              <g class="geo">
                <path d="M328 182.500H764M328 244.500H642M297 432.500H764" />
                <path d="M328.500 182L297.500 432L289.500 493M641.500 182L672.500 432L681.500 509" />
                <path d="M390.500 190L351.500 502M579.500 190L619.500 516" />
                <path d="M328.500 182.500A228.500 228.500 0 0 0 641.500 182.500" />
                <path d="M328.500 182.500A158 158 0 0 1 297.500 432.500M641.500 182.500A158 158 0 0 0 672.500 432.500" />
                <path d="M375 216L450 259L535 239M342 394L450 259L653 420" />
              </g>
              <!-- extension lines -->
              <g class="geo">
                <path d="M328.500 106V182M641.500 106V182M297.500 432V568M672.500 432V568" />
                <path d="M375 216L406 157M450 259L482 199M450 259L460 300M535 239L543 281" />
                <path d="M342 394L389 432M653 420L617 466" />
              </g>
              <!-- dimension lines -->
              <g class="geo dim">
                <path d="M329 118.500H641" />
                <path d="M298 555.500H672" />
                <path d="M751.500 183V432" />
                <path d="M400 168L477 211" />
                <path d="M457 288L542 270" />
                <path d="M379 424L487 288" />
                <path d="M420 295L624 456" />
                <path d="M291 482L353 488" />
                <path d="M618 503L680 496" />
              </g>
              <g class="dim-text">
                <text transform="translate(485 118)">50</text>
                <text transform="translate(485 555)">60</text>
                <text transform="translate(750 307) rotate(-90)">40</text>
                <text transform="translate(441 188) rotate(29)">13.8627</text>
                <text transform="translate(498 278) rotate(-12)">13.8627</text>
                <text transform="translate(432 356) rotate(-51)">27.7255</text>
                <text transform="translate(524 375) rotate(38)">41.5882</text>
                <text transform="translate(323 485) rotate(6)">10</text>
                <text transform="translate(649 499) rotate(-6)">10</text>
              </g>
              <!-- UCS icon -->
              <g class="geo">
                <path d="M183.500 524V464M179 520.500H240M179.500 516.500h8v8h-8z" />
                <path d="M183.500 464L179.500 474.500H187.500zM240 520.500L229.500 516.500V524.500z" />
              </g>
              <g class="ucs-text">
                <text x="185" y="455">Y</text>
                <text x="254" y="526">X</text>
              </g>
              <!-- crosshair -->
              <path class="geo" d="M0 565.500H938M833.500 98V571M829.500 561.500h8v8h-8z" />
            </g>
          </svg>
          <div class="tabs">
            <button class="nav" aria-label="第一个"><svg viewBox="0 0 12 12"><path d="M2 1h1v10H2zM10 1v10L4 6z" /></svg></button>
            <button class="nav" aria-label="上一页"><svg viewBox="0 0 12 12"><path d="M8 2v8L3 6z" /></svg></button>
            <button class="nav" aria-label="下一页"><svg viewBox="0 0 12 12"><path d="M4 2v8l5-4z" /></svg></button>
            <button class="nav" aria-label="最后一个"><svg viewBox="0 0 12 12"><path d="M9 1h1v10H9zM2 1v10l6-5z" /></svg></button>
            <button class="tab active">模型</button>
            <button class="tab">布局<span class="en">1</span></button>
            <button class="tab">布局<span class="en">2</span></button>
          </div>
        </section>

        <aside class="side">
          <div class="toolbar vertical">
            <i class="grip"></i>
            <button class="tool" aria-label="直线"><svg><use href="#line" /></svg></button>
            <button class="tool" aria-label="构造线"><svg><use href="#xline" /></svg></button>
            <button class="tool" aria-label="多段线"><svg><use href="#pline" /></svg></button>
            <button class="tool" aria-label="正多边形"><svg><use href="#polygon" /></svg></button>
            <button class="tool" aria-label="矩形"><svg><use href="#rect" /></svg></button>
            <button class="tool" aria-label="圆弧"><svg><use href="#arc" /></svg></button>
            <button class="tool" aria-label="圆"><svg><use href="#circle" /></svg></button>
            <button class="tool" aria-label="修订云线"><svg><use href="#cloud" /></svg></button>
            <button class="tool" aria-label="样条曲线"><svg><use href="#spline" /></svg></button>
            <button class="tool" aria-label="椭圆"><svg><use href="#ellipse" /></svg></button>
            <button class="tool" aria-label="椭圆弧"><svg><use href="#earc" /></svg></button>
            <button class="tool" aria-label="插入块"><svg><use href="#insert" /></svg></button>
            <button class="tool" aria-label="创建块"><svg><use href="#block" /></svg></button>
            <button class="tool" aria-label="点"><svg><use href="#point" /></svg></button>
            <button class="tool" aria-label="图案填充"><svg><use href="#hatch" /></svg></button>
            <button class="tool" aria-label="渐变色"><svg><use href="#gradient" /></svg></button>
            <button class="tool" aria-label="面域"><svg><use href="#region" /></svg></button>
            <button class="tool" aria-label="表格"><svg><use href="#table" /></svg></button>
            <button class="tool mtext" aria-label="多行文字">A</button>
          </div>
          <div class="toolbar vertical">
            <i class="grip"></i>
            <button class="tool" aria-label="删除"><svg><use href="#erase" /></svg></button>
            <button class="tool" aria-label="复制对象"><svg><use href="#copyobj" /></svg></button>
            <button class="tool" aria-label="镜像"><svg><use href="#mirror" /></svg></button>
            <button class="tool" aria-label="偏移"><svg><use href="#offset" /></svg></button>
            <button class="tool" aria-label="阵列"><svg><use href="#array" /></svg></button>
            <button class="tool" aria-label="移动"><svg><use href="#move" /></svg></button>
            <button class="tool" aria-label="旋转"><svg><use href="#rotate" /></svg></button>
            <button class="tool" aria-label="缩放"><svg><use href="#scale" /></svg></button>
            <button class="tool" aria-label="拉伸"><svg><use href="#stretch" /></svg></button>
            <button class="tool" aria-label="修剪"><svg><use href="#trim" /></svg></button>
            <button class="tool" aria-label="延伸"><svg><use href="#extend" /></svg></button>
            <button class="tool" aria-label="打断于点"><svg><use href="#breakpt" /></svg></button>
            <button class="tool" aria-label="打断"><svg><use href="#break" /></svg></button>
            <button class="tool" aria-label="合并"><svg><use href="#join" /></svg></button>
            <button class="tool" aria-label="倒角"><svg><use href="#chamfer" /></svg></button>
            <button class="tool" aria-label="圆角"><svg><use href="#fillet" /></svg></button>
            <button class="tool" aria-label="分解"><svg><use href="#explode" /></svg></button>
          </div>
          <div class="toolbar vertical">
            <i class="grip"></i>
            <button class="tool" aria-label="前置"><svg><use href="#front1" /></svg></button>
            <button class="tool" aria-label="后置"><svg><use href="#back1" /></svg></button>
            <button class="tool" aria-label="置于对象之上"><svg><use href="#above" /></svg></button>
            <button class="tool" aria-label="置于对象之下"><svg><use href="#under" /></svg></button>
          </div>
        </aside>
      </div>

      <div class="dock">
        <div class="toolbar">
          <i class="grip"></i>
          <button class="tool" aria-label="UCS"><svg><use href="#ucs" /></svg></button>
          <button class="tool" aria-label="命名 UCS"><svg><use href="#ucsnamed" /></svg></button>
          <i class="sep"></i>
          <button class="tool" aria-label="上一个 UCS"><svg><use href="#ucsprev" /></svg></button>
          <i class="sep"></i>
          <button class="tool" aria-label="世界 UCS"><svg><use href="#ucsworld" /></svg></button>
          <button class="tool" aria-label="对象 UCS"><svg><use href="#ucsobj" /></svg></button>
          <button class="tool" aria-label="面 UCS"><svg><use href="#ucsface" /></svg></button>
          <button class="tool" aria-label="视图 UCS"><svg><use href="#ucsview" /></svg></button>
          <i class="sep"></i>
          <button class="tool" aria-label="原点 UCS"><svg><use href="#ucsorg" /></svg></button>
          <button class="tool" aria-label="Z 轴矢量 UCS"><svg><use href="#ucs" /><text x="11" y="9" class="glyph-sm">Z</text></svg></button>
          <button class="tool" aria-label="三点 UCS"><svg><use href="#ucs" /><text x="11" y="9" class="glyph-sm">3</text></svg></button>
          <i class="sep"></i>
          <button class="tool" aria-label="X 轴旋转 UCS"><svg><use href="#ucsrot" /><text x="9" y="13" class="glyph-sm">X</text></svg></button>
          <button class="tool" aria-label="Y 轴旋转 UCS"><svg><use href="#ucsrot" /><text x="9" y="13" class="glyph-sm">Y</text></svg></button>
          <button class="tool" aria-label="Z 轴旋转 UCS"><svg><use href="#ucsrot" /><text x="9" y="13" class="glyph-sm">Z</text></svg></button>
          <i class="sep"></i>
          <button class="tool" aria-label="应用 UCS"><svg><use href="#ucsapply" /></svg></button>
        </div>
        <div class="toolbar">
          <i class="grip"></i>
          <button class="tool" aria-label="命名视图"><svg><use href="#views" /></svg></button>
          <i class="sep"></i>
          <button class="tool" aria-label="俯视图"><svg><use href="#vtop" /></svg></button>
          <button class="tool" aria-label="仰视图"><svg><use href="#vbottom" /></svg></button>
          <button class="tool" aria-label="左视图"><svg><use href="#vleft" /></svg></button>
          <button class="tool" aria-label="右视图"><svg><use href="#vright" /></svg></button>
          <button class="tool" aria-label="主视图"><svg><use href="#vfront" /></svg></button>
          <button class="tool" aria-label="后视图"><svg><use href="#vback" /></svg></button>
          <i class="sep"></i>
          <button class="tool" aria-label="西南等轴测"><svg><use href="#vsw" /></svg></button>
          <button class="tool" aria-label="东南等轴测"><svg><use href="#vse" /></svg></button>
          <button class="tool" aria-label="东北等轴测"><svg><use href="#vne" /></svg></button>
          <button class="tool" aria-label="西北等轴测"><svg><use href="#vnw" /></svg></button>
          <i class="sep"></i>
          <button class="tool" aria-label="相机"><svg><use href="#camera" /></svg></button>
          <i class="sep"></i>
          <div class="combo view off">
            <select aria-label="视口比例" disabled><option></option></select>
            <i class="drop"></i>
          </div>
        </div>
      </div>

      <div class="dock">
        <div class="toolbar">
          <i class="grip"></i>
          <button class="tool" aria-label="二维线框"><svg><use href="#sh2d" /></svg></button>
          <button class="tool" aria-label="三维线框"><svg><use href="#sh3d" /></svg></button>
          <button class="tool" aria-label="消隐"><svg><use href="#shhid" /></svg></button>
          <button class="tool" aria-label="平面着色"><svg><use href="#shflat" /></svg></button>
          <button class="tool" aria-label="体着色"><svg><use href="#shgour" /></svg></button>
          <button class="tool" aria-label="带边框平面着色"><svg><use href="#shflate" /></svg></button>
          <button class="tool" aria-label="带边框体着色"><svg><use href="#shgoure" /></svg></button>
        </div>
        <div class="toolbar">
          <i class="grip"></i>
          <button class="tool" aria-label="三维平移"><svg><use href="#pan" /></svg></button>
          <button class="tool" aria-label="三维缩放"><svg><use href="#zoom" /></svg></button>
          <button class="tool" aria-label="三维动态观察"><svg><use href="#orbit" /></svg></button>
          <button class="tool" aria-label="三维连续观察"><svg><use href="#corbit" /></svg></button>
          <button class="tool" aria-label="三维旋转"><svg><use href="#swivel" /></svg></button>
          <button class="tool" aria-label="三维调整距离"><svg><use href="#dist" /></svg></button>
          <button class="tool" aria-label="三维调整剪裁平面"><svg><use href="#clipadj" /></svg></button>
          <button class="tool" aria-label="启用前向剪裁"><svg><use href="#clipf" /></svg></button>
          <button class="tool" aria-label="启用后向剪裁"><svg><use href="#clipb" /></svg></button>
          <i class="sep"></i>
          <div class="combo view">
            <select aria-label="三维视图"><option></option></select>
            <i class="drop"></i>
          </div>
        </div>
      </div>

      <section class="command">
        <i class="grip"></i>
        <div class="console">
          <div class="history">
            <div class="lines">
              <p>指定窗口的角点<span>, </span>输入比例因子<span> (nX </span>或<span> nXP), </span>或者</p>
              <p><span>[</span>全部<span>(A)/</span>中心<span>(C)/</span>动态<span>(D)/</span>范围<span>(E)/</span>上一个<span>(P)/</span>比例<span>(S)/</span>窗口<span>(W)/</span>对象<span>(O)] &lt;</span>实时<span>&gt;: a</span></p>
            </div>
            <div class="scroll-v">
              <button aria-label="向上滚动"><svg viewBox="0 0 8 8"><path d="M1 5h6L4 2z" /></svg></button>
              <button aria-label="向下滚动"><svg viewBox="0 0 8 8"><path d="M1 3h6L4 6z" /></svg></button>
            </div>
          </div>
          <div class="prompt">
            <label for="command-line">命令<span>:</span></label>
            <input id="command-line" type="text" />
            <div class="scroll-h">
              <button aria-label="向左滚动"><svg viewBox="0 0 8 8"><path d="M5 1v6L2 4z" /></svg></button>
              <button class="thumb" aria-label="滚动块"></button>
              <i class="track"></i>
              <button aria-label="向右滚动"><svg viewBox="0 0 8 8"><path d="M3 1v6l3-3z" /></svg></button>
            </div>
          </div>
        </div>
      </section>

      <footer class="status-bar">
        <output class="coords en">99.2184, 43.0747, 0.0000</output>
        <button>捕捉</button>
        <button>栅格</button>
        <button>正交</button>
        <button>极轴</button>
        <button class="on">对象捕捉</button>
        <button class="on">对象追踪</button>
        <button class="en">DYN</button>
        <button>线宽</button>
        <button class="on">模型</button>
        <div class="status-tray">
          <span class="tray-lock"><svg class="icon"><use href="#padlock" /></svg></span>
          <button class="more" aria-label="状态栏菜单"></button>
          <svg class="size-grip" viewBox="0 0 12 12"><path d="M1 12L12 1M5 12l7-7M9 12l3-3" stroke="#808080" /></svg>
        </div>
      </footer>
    </main>

    <footer class="taskbar">
      <button class="start"><svg class="icon"><use href="#winflag" /></svg>开始</button>
      <i class="bar"></i>
      <div class="quick">
        <button class="tool" aria-label="Internet Explorer"><svg><use href="#ie" /></svg></button>
        <button class="tool" aria-label="显示桌面"><svg><use href="#desk" /></svg></button>
        <button class="tool" aria-label="文件夹"><svg><use href="#folder" /></svg></button>
        <button class="tool" aria-label="媒体播放器"><svg><use href="#media" /></svg></button>
        <span class="chevron">»</span>
      </div>
      <i class="bar"></i>
      <button class="task"><svg class="icon"><use href="#acad" /></svg><span class="en">AutoCAD 2006 - [Dra...</span></button>
      <div class="deskband">
        <i class="bar"></i>
        <svg class="icon"><use href="#keyboard" /></svg>
        <i class="bar"></i>
        <span>桌面</span>
        <span class="chevron">»</span>
      </div>
      <div class="tray">
        <span class="chevron">«</span>
        <svg class="icon"><use href="#kav" /></svg>
        <svg class="icon"><use href="#net" /></svg>
        <svg class="icon"><use href="#power" /></svg>
        <time class="en">20:39</time>
      </div>
    </footer>
  </body>
</html>
```

FILE: styles.css
```css
* {
  box-sizing: border-box;
}

body {
  margin: 0;
  min-height: 100vh;
  display: flex;
  flex-direction: column;
  background: #3a6ea5;
  font-family: "Liberation Mono", "Noto Sans CJK SC", monospace;
  font-size: 12px;
  line-height: 14px;
  color: #000;
}

button,
select,
input {
  font: inherit;
  color: inherit;
  margin: 0;
  padding: 0;
  border: 0;
  border-radius: 0;
  background: none;
}

button {
  display: flex;
  align-items: center;
  justify-content: center;
  white-space: nowrap;
}

svg {
  display: block;
  flex: none;
}

.sprite {
  position: absolute;
  width: 0;
  height: 0;
}

.en,
button.en {
  font-size: 10px;
}

.icon {
  width: 16px;
  height: 16px;
}

.glyph-help {
  font: bold 14px "Liberation Sans", sans-serif;
}

.glyph-sm {
  font: bold 9px "Liberation Sans", sans-serif;
}

/* window frame */
.window {
  flex: 1;
  display: flex;
  flex-direction: column;
  margin: 0 3px 7px 4px;
  padding: 2px;
  background: #d4d0c8;
  border: 1px solid;
  border-color: #d4d0c8 #404040 #404040 #d4d0c8;
  box-shadow: inset 1px 1px #fff, inset -1px -1px #808080;
}

.title-bar {
  height: 18px;
  display: flex;
  align-items: center;
  padding: 0 2px;
  gap: 2px;
  background: linear-gradient(to right, #0a246a, #a6caf0);
}

.title-bar h1 {
  margin: 0;
  font-size: 12px;
  line-height: 18px;
  color: #fff;
}

.caption-buttons {
  margin-left: auto;
  display: flex;
}

.caption-buttons button {
  width: 16px;
  height: 14px;
}

.caption-buttons svg {
  width: 12px;
  height: 10px;
}

.caption-buttons .close {
  margin-left: 2px;
}

.caption-buttons button,
.nav,
.drop,
.scroll-v button,
.scroll-h button,
.start {
  background: #d4d0c8;
  border: 1px solid;
  border-color: #fff #404040 #404040 #fff;
  box-shadow: inset -1px -1px #808080;
}

.menu-bar {
  height: 21px;
  display: flex;
  align-items: center;
  gap: 12px;
  padding: 0 2px 0 4px;
}

.menu-bar > .icon {
  margin-right: -6px;
}

/* toolbars */
.dock {
  height: 28px;
  display: flex;
  gap: 2px;
  border-top: 1px solid #fff;
  overflow: hidden;
}

.menu-bar + .dock {
  height: 27px;
}

.toolbar {
  display: flex;
  align-items: center;
  padding-right: 1px;
  border: 1px solid;
  border-color: #fff #808080 #808080 #fff;
}

.toolbar.grow {
  flex: 1;
  overflow: hidden;
}

.grip {
  flex: none;
  width: 8px;
  height: 22px;
  margin: 0 3px 0 1px;
  border: solid;
  border-width: 0 1px;
  border-color: #fff #808080;
  background: linear-gradient(to right, #d4d0c8 2px, #808080 2px, #808080 3px, #fff 3px, #fff 4px, #d4d0c8 4px);
}

.sep {
  flex: none;
  width: 2px;
  height: 20px;
  margin: 0 2px;
  background: linear-gradient(to right, #808080 1px, #fff 1px);
}

.combo + .sep {
  margin: 0 3px;
}

.tool {
  flex: none;
  width: 23px;
  height: 22px;
}

.tool svg {
  width: 18px;
  height: 18px;
}

.mtext {
  font: 19px "Liberation Sans", sans-serif;
}

.more {
  flex: none;
  width: 13px;
  height: 20px;
}

.more::before,
.drop::before {
  content: "";
  border: 4px solid transparent;
  border-top-color: #000;
  border-bottom: 0;
}

.more:disabled::before,
.off .drop::before {
  border-top-color: #a09c94;
}

.combo {
  display: flex;
  align-items: center;
  height: 22px;
  padding: 1px;
  background: #fff;
  border: 1px solid;
  border-color: #404040 #fff #fff #404040;
}

.combo svg {
  width: 16px;
  height: 16px;
  margin-left: 1px;
}

.combo select {
  flex: 1;
  min-width: 0;
  appearance: none;
  font-size: 10px;
  padding-left: 5px;
}

.combo .zh {
  font-size: 12px;
}

.combo.off {
  background: #d4d0c8;
  color: #808080;
}

.combo select:disabled {
  opacity: 1;
  color: #808080;
}

.layer { width: 298px; }
.color { width: 148px; }
.linetype { width: 158px; }
.weight { width: 122px; }
.plot { width: 120px; }
.view { width: 140px; }

.grip + .combo {
  margin-left: 3px;
}

.swatch {
  flex: none;
  width: 10px;
  height: 10px;
  margin-left: 4px;
  border: 1px solid #000;
  background: #fff;
}

.layer .swatch {
  margin-left: 1px;
}

.rule {
  flex: none;
  width: 62px;
  margin-left: 3px;
  border-top: 1px solid #000;
}

.weight .rule {
  width: 35px;
}

.drop {
  flex: none;
  align-self: stretch;
  width: 15px;
  display: flex;
  align-items: center;
  justify-content: center;
}

/* drawing area */
.workspace {
  flex: 1;
  display: flex;
  min-height: 0;
}

.drawing {
  flex: 1;
  min-width: 0;
  display: flex;
  flex-direction: column;
  border: solid #404040;
  border-width: 1px 0 0 1px;
}

.canvas {
  flex: 1;
  width: 100%;
  min-height: 473px;
  background: #000;
}

.geo {
  fill: none;
  stroke: #fff;
  stroke-width: 1;
  shape-rendering: crispEdges;
}

.dim path {
  marker-start: url(#arrow);
  marker-end: url(#arrow);
}

.dim-text,
.ucs-text {
  fill: #fff;
  text-anchor: middle;
  font-family: "Liberation Sans Narrow", Roboto, "Liberation Sans", sans-serif;
  font-weight: 300;
  font-size: 18px;
}

.ucs-text {
  font-size: 16px;
}

.tabs {
  height: 17px;
  display: flex;
  background: #d4d0c8;
}

.nav {
  width: 18px;
  height: 16px;
}

.nav svg {
  width: 12px;
  height: 12px;
}

.tab {
  position: relative;
  z-index: 0;
  height: 15px;
  padding: 0 5px;
  margin-left: 2px;
  background: #d4d0c8;
  border-bottom: 1px solid #000;
}

.tab::before,
.tab::after {
  content: "";
  position: absolute;
  z-index: -1;
  top: 0;
  bottom: 0;
  width: 5px;
  background: inherit;
}

.tab::before {
  left: -2px;
  border-left: 1px solid #000;
  transform: skewX(20deg);
}

.tab::after {
  right: -2px;
  border-right: 1px solid #000;
  transform: skewX(-20deg);
}

.tab.active {
  z-index: 1;
  margin-left: 6px;
  background: #000;
  color: #fff;
}

.side {
  display: flex;
  align-items: flex-start;
  gap: 1px;
  padding-left: 2px;
}

.vertical {
  flex-direction: column;
  width: 25px;
  padding: 0 0 4px;
}

.vertical .grip {
  width: 20px;
  height: 7px;
  margin: 1px 0 2px;
  border-width: 1px 0;
  background: linear-gradient(#d4d0c8 2px, #808080 2px, #808080 3px, #fff 3px, #fff 4px, #d4d0c8 4px);
}

/* command window */
.command {
  height: 61px;
  display: flex;
  padding: 5px 8px 2px 4px;
  border-top: 1px solid #fff;
  background: linear-gradient(#d4d0c8 4px, #000 4px, #000 5px, #d4d0c8 5px);
}

.command .grip {
  height: 42px;
  margin-top: 8px;
}

.console {
  flex: 1;
  margin-top: 5px;
  min-width: 0;
  border: 1px solid;
  border-color: #000 #fff #fff #000;
  font-size: 15px;
}

.console span {
  font-size: 14px;
  white-space: pre;
}

.history {
  height: 31px;
  display: flex;
  background: #fff;
  border-bottom: 1px solid #808080;
}

.lines {
  flex: 1;
  min-width: 0;
}

.lines p {
  margin: 0;
  padding-left: 1px;
  height: 14px;
  line-height: 14px;
  white-space: nowrap;
}

.scroll-v button {
  width: 16px;
  height: 15px;
}

.scroll-v svg,
.scroll-h svg {
  width: 8px;
  height: 8px;
}

.prompt {
  height: 16px;
  display: flex;
  background: #fff;
  line-height: 16px;
}

.prompt label {
  padding-left: 1px;
}

.prompt input {
  flex: 1;
  min-width: 0;
  outline: 0;
}

.scroll-h {
  display: flex;
  padding: 0 17px 0 3px;
  background: #d4d0c8;
}

.scroll-h button {
  width: 15px;
  height: 15px;
}

.track {
  width: 15px;
  background: #ebe9e4;
}

/* status bar */
.status-bar {
  height: 24px;
  display: flex;
  align-items: center;
  gap: 4px;
  padding: 0 1px 0 5px;
  border-top: 1px solid #fff;
}

.coords {
  width: 250px;
  height: 18px;
  margin-right: 1px;
  padding-left: 1px;
  line-height: 16px;
  color: #808080;
  border: 1px solid #808080;
}

.status-bar > button {
  height: 19px;
  padding: 0 1px;
  border: 1px solid;
  border-color: #fff #808080 #808080 #fff;
}

.status-bar > .on {
  border-color: #000 #fff #fff #000;
}

.status-tray {
  margin-left: auto;
  display: flex;
  align-items: center;
  gap: 4px;
}

.status-tray .more {
  width: 16px;
}

.tray-lock {
  padding: 0 3px;
  border: 1px solid;
  border-color: #808080 #fff #fff #808080;
}

.size-grip {
  width: 12px;
  height: 12px;
  align-self: flex-end;
}

/* taskbar */
.taskbar {
  height: 29px;
  display: flex;
  align-items: center;
  padding: 0 3px 0 2px;
  background: #d4d0c8;
  border-top: 1px solid #fff;
}

.start {
  height: 22px;
  padding: 0 2px;
  gap: 1px;
}

.bar {
  flex: none;
  width: 2px;
  height: 20px;
  margin: 0 5px 0 6px;
  background: linear-gradient(to right, #fff 1px, #808080 1px);
}

.quick {
  display: flex;
  width: 129px;
}

.chevron {
  font: bold 14px "Liberation Sans", sans-serif;
}

.quick .chevron {
  margin-left: auto;
}

.task {
  width: 160px;
  height: 22px;
  gap: 4px;
  padding: 0 3px;
  justify-content: flex-start;
  background: #eae8e3;
  border: 1px solid;
  border-color: #404040 #fff #fff #404040;
}

.deskband {
  margin-left: auto;
  display: flex;
  align-items: center;
}

.deskband .icon + .bar {
  margin: 0 4px;
}

.deskband .chevron {
  margin: 0 6px;
  align-self: flex-start;
}

.deskband .bar:first-child {
  margin-right: 7px;
}

.tray {
  height: 22px;
  display: flex;
  align-items: center;
  gap: 3px;
  padding: 0 6px 0 4px;
  border: 1px solid;
  border-color: #808080 #fff #fff #808080;
}

.tray time {
  margin-left: 4px;
}
```
